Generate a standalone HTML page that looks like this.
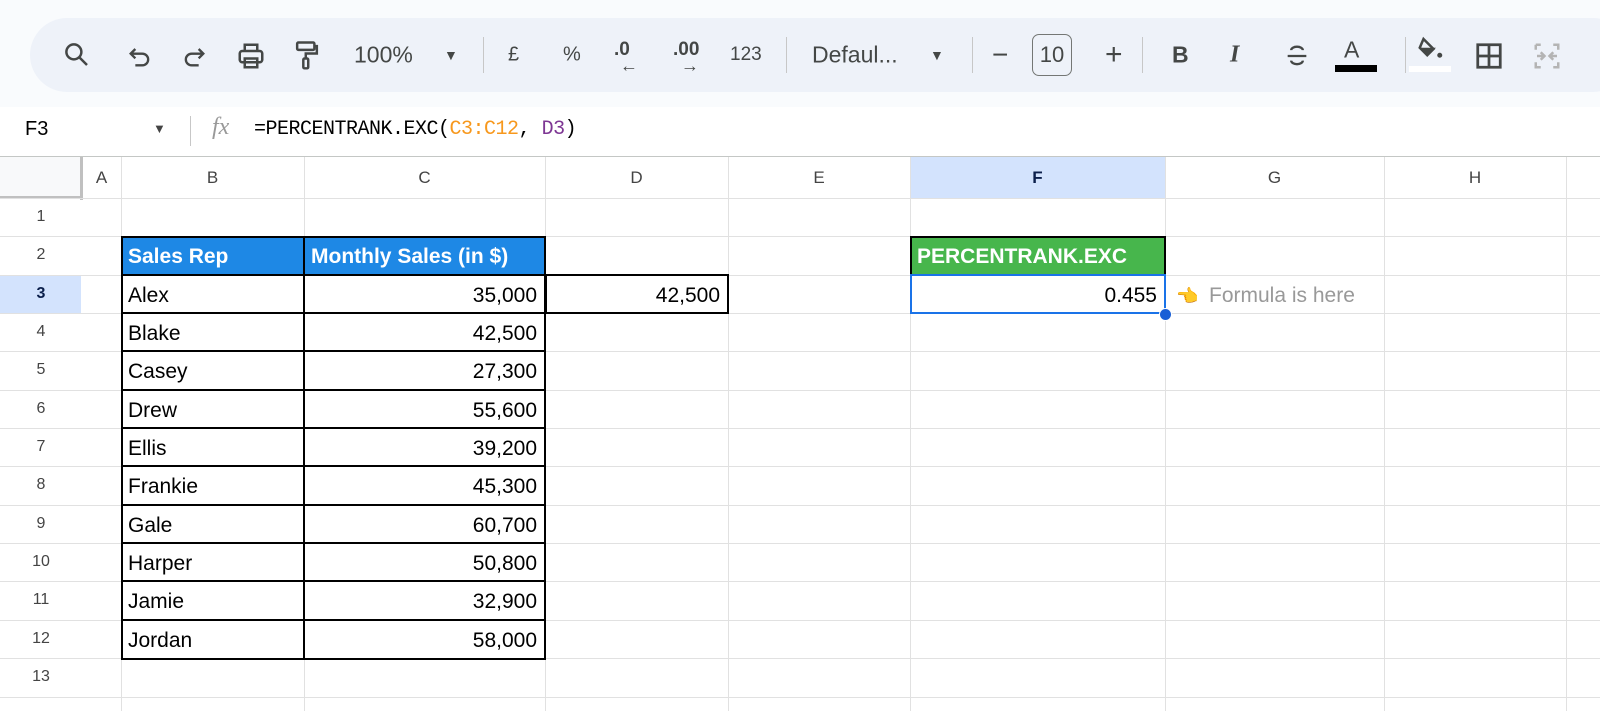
<!DOCTYPE html>
<html><head><meta charset="utf-8"><style>
*{margin:0;padding:0;box-sizing:border-box}
body{width:1600px;height:711px;overflow:hidden;background:#fff;font-family:"Liberation Sans",Arial,sans-serif;position:relative}
.a{position:absolute}
.top{left:0;top:0;width:1600px;height:107px;background:#f9fbfd}
.pill{left:30px;top:18px;width:1600px;height:74px;background:#eef2f9;border-radius:37px}
.tb{position:absolute;top:55px;transform:translateY(-50%);color:#444746;font-size:22px}
.sep{position:absolute;top:37px;width:1px;height:36px;background:#c7c7c7}
.vl{position:absolute;top:157px;width:1px;height:554px;background:#e1e1e1}
.hl{position:absolute;left:0;width:1600px;height:1px;background:#e1e1e1}
.ch{position:absolute;top:158px;height:40px;line-height:40px;text-align:center;font-size:17px;color:#444}
.rh{position:absolute;left:0;width:82px;text-align:center;font-size:16px;color:#444}
.c{position:absolute;font-size:21px;color:#000;line-height:38px;padding:0 6px;white-space:nowrap}
</style></head><body>
<div class="a top"></div>
<div class="a pill"></div>
<svg class="a" style="left:62px;top:40px" width="30" height="30" viewBox="0 0 24 24" fill="none" stroke="#444746" stroke-width="2"><circle cx="9.5" cy="9.5" r="6"/><path d="M14 14l6 6"/></svg>
<svg class="a" style="left:126px;top:42px" width="28" height="28" viewBox="0 0 24 24" fill="none" stroke="#444746" stroke-width="2"><path d="M8 6L4 10l4 4"/><path d="M4 10h10a5 5 0 010 10H8"/></svg>
<svg class="a" style="left:180px;top:42px" width="28" height="28" viewBox="0 0 24 24" fill="none" stroke="#444746" stroke-width="2"><path d="M16 6l4 4-4 4"/><path d="M20 10H10a5 5 0 000 10h6"/></svg>
<svg class="a" style="left:236px;top:41px" width="30" height="30" viewBox="0 0 24 24" fill="none" stroke="#444746" stroke-width="2"><rect x="3" y="8" width="18" height="9" rx="2"/><path d="M7 8V3h10v5M7 14h10v7H7z"/></svg>
<svg class="a" style="left:292px;top:40px" width="30" height="32" viewBox="0 0 24 26" fill="none" stroke="#444746" stroke-width="2"><rect x="4" y="2" width="14" height="6" rx="1"/><path d="M18 5h2v6h-9v4"/><rect x="9" y="15" width="4" height="8" rx="1"/></svg>
<div class="tb" style="left:354px;font-size:23px">100%</div>
<div class="tb" style="left:444px;font-size:14px">▼</div>
<div class="sep" style="left:483px"></div>
<div class="tb" style="left:508px;font-size:20px">£</div>
<div class="tb" style="left:563px;font-size:20px">%</div>
<div class="tb" style="left:614px;font-size:19px;top:50px;font-weight:bold">.0</div>
<div class="tb" style="left:620px;font-size:18px;top:66px;font-weight:bold">←</div>
<div class="tb" style="left:673px;font-size:19px;top:50px;font-weight:bold">.00</div>
<div class="tb" style="left:681px;font-size:18px;top:66px;font-weight:bold">→</div>
<div class="tb" style="left:730px;font-size:19px">123</div>
<div class="sep" style="left:786px"></div>
<div class="tb" style="left:812px;font-size:23px">Defaul...</div>
<div class="tb" style="left:930px;font-size:14px">▼</div>
<div class="sep" style="left:972px"></div>
<div class="tb" style="left:992px;font-size:28px">−</div>
<div class="a" style="left:1032px;top:34px;width:40px;height:42px;border:1.5px solid #747775;border-radius:7px;text-align:center;line-height:39px;font-size:22px;color:#444746">10</div>
<div class="tb" style="left:1105px;font-size:30px">+</div>
<div class="sep" style="left:1142px"></div>
<div class="tb" style="left:1172px;font-size:23px;font-weight:bold">B</div>
<div class="tb" style="left:1230px;font-size:24px;font-style:italic;font-family:'Liberation Serif',serif;font-weight:bold">I</div>
<svg class="a" style="left:1283px;top:42px" width="28" height="28" viewBox="0 0 24 24" fill="none" stroke="#444746" stroke-width="2"><path d="M7 7a5 3 0 0110 0M4 12h16M7 16a5 3 0 0010 0"/></svg>
<div class="tb" style="left:1344px;font-size:23px;top:50px">A</div>
<div class="a" style="left:1335px;top:65px;width:42px;height:7px;background:#000"></div>
<div class="sep" style="left:1405px"></div>
<svg class="a" style="left:1416px;top:35px" width="30" height="28" viewBox="0 0 24 22" fill="#444746"><path d="M6 3l8 8-5 5-6-6z" fill="none" stroke="#444746" stroke-width="2"/><path d="M4 10h12l-7 6z"/><circle cx="19" cy="16" r="2"/></svg>
<div class="a" style="left:1409px;top:66px;width:42px;height:6px;background:#fff"></div>
<svg class="a" style="left:1474px;top:41px" width="30" height="30" viewBox="0 0 24 24" fill="none" stroke="#444746" stroke-width="2.2"><rect x="3" y="3" width="18" height="18"/><path d="M12 3v18M3 12h18"/></svg>
<svg class="a" style="left:1532px;top:41px" width="30" height="30" viewBox="0 0 24 24" fill="none" stroke="#b4b4b4" stroke-width="2"><path d="M3 3h4M3 3v4M3 17v4h4M17 3h4v4M21 17v4h-4M4 12h5M7 9l3 3-3 3M20 12h-5M17 9l-3 3 3 3"/></svg>

<div class="a" style="left:25px;top:118px;font-size:20px;color:#000">F3</div>
<div class="a" style="left:153px;top:121px;font-size:13px;color:#444">▼</div>
<div class="a" style="left:190px;top:116px;width:1px;height:30px;background:#c7c7c7"></div>
<div class="a" style="left:212px;top:114px;font-size:24px;color:#999;font-style:italic;font-family:'Liberation Serif',serif">fx</div>
<div class="a" style="left:254px;top:118px;font-size:20px;font-family:'Liberation Mono',monospace;color:#000;letter-spacing:-0.5px">=PERCENTRANK.EXC(<span style="color:#f7981d">C3:C12</span>, <span style="color:#7e3794">D3</span>)</div>
<div class="hl" style="top:156px;background:#c4c7c5"></div>

<div class="a" style="left:0;top:157px;width:1600px;height:41px;background:#fff"></div>
<div class="a" style="left:0;top:157px;width:80px;height:39px;background:#f8f9fa"></div>
<div class="a" style="left:80px;top:157px;width:3px;height:43px;background:#c0c0c0"></div>
<div class="a" style="left:0;top:196px;width:83px;height:3px;background:#c0c0c0"></div>
<div class="a" style="left:910px;top:157px;width:255px;height:41px;background:#d3e3fd"></div>
<div class="a" style="left:0;top:275px;width:81px;height:38px;background:#d3e3fd"></div>
<div class="vl" style="left:121px"></div><div class="vl" style="left:304px"></div><div class="vl" style="left:545px"></div><div class="vl" style="left:728px"></div><div class="vl" style="left:910px"></div><div class="vl" style="left:1165px"></div><div class="vl" style="left:1384px"></div><div class="vl" style="left:1566px"></div>
<div class="hl" style="top:198px"></div><div class="hl" style="top:236px"></div><div class="hl" style="top:275px"></div><div class="hl" style="top:313px"></div><div class="hl" style="top:351px"></div><div class="hl" style="top:390px"></div><div class="hl" style="top:428px"></div><div class="hl" style="top:466px"></div><div class="hl" style="top:505px"></div><div class="hl" style="top:543px"></div><div class="hl" style="top:581px"></div><div class="hl" style="top:620px"></div><div class="hl" style="top:658px"></div><div class="hl" style="top:697px"></div>

<div class="ch" style="left:82px;width:39px">A</div><div class="ch" style="left:121px;width:183px">B</div><div class="ch" style="left:304px;width:241px">C</div><div class="ch" style="left:545px;width:183px">D</div><div class="ch" style="left:728px;width:182px">E</div><div class="ch" style="left:910px;width:255px;color:#0b1f4b;font-weight:bold">F</div><div class="ch" style="left:1165px;width:219px">G</div><div class="ch" style="left:1384px;width:182px">H</div>

<div class="rh" style="top:208px">1</div><div class="rh" style="top:246px">2</div><div class="rh" style="top:285px;font-weight:bold;color:#0b1f4b">3</div><div class="rh" style="top:323px">4</div><div class="rh" style="top:361px">5</div><div class="rh" style="top:400px">6</div><div class="rh" style="top:438px">7</div><div class="rh" style="top:476px">8</div><div class="rh" style="top:515px">9</div><div class="rh" style="top:553px">10</div><div class="rh" style="top:591px">11</div><div class="rh" style="top:630px">12</div><div class="rh" style="top:668px">13</div>

<div class="a" style="left:121px;top:236px;width:425px;height:39px;background:#1e88e5"></div>
<div class="a" style="left:121px;top:236px;width:425px;height:424px;border:2px solid #000"></div>
<div class="a" style="left:303px;top:236px;width:2px;height:424px;background:#000"></div>
<div class="a" style="left:121px;top:274px;width:425px;height:2px;background:#000"></div>
<div class="a" style="left:121px;top:312px;width:425px;height:2px;background:#000"></div>
<div class="a" style="left:121px;top:350px;width:425px;height:2px;background:#000"></div>
<div class="a" style="left:121px;top:389px;width:425px;height:2px;background:#000"></div>
<div class="a" style="left:121px;top:427px;width:425px;height:2px;background:#000"></div>
<div class="a" style="left:121px;top:465px;width:425px;height:2px;background:#000"></div>
<div class="a" style="left:121px;top:504px;width:425px;height:2px;background:#000"></div>
<div class="a" style="left:121px;top:542px;width:425px;height:2px;background:#000"></div>
<div class="a" style="left:121px;top:580px;width:425px;height:2px;background:#000"></div>
<div class="a" style="left:121px;top:619px;width:425px;height:2px;background:#000"></div>
<div class="c" style="left:122px;top:238px;color:#fff;font-weight:bold">Sales Rep</div>
<div class="c" style="left:305px;top:238px;color:#fff;font-weight:bold">Monthly Sales (in $)</div>
<div class="c" style="left:122px;top:277px">Alex</div><div class="c" style="left:122px;top:315px">Blake</div><div class="c" style="left:122px;top:353px">Casey</div><div class="c" style="left:122px;top:392px">Drew</div><div class="c" style="left:122px;top:430px">Ellis</div><div class="c" style="left:122px;top:468px">Frankie</div><div class="c" style="left:122px;top:507px">Gale</div><div class="c" style="left:122px;top:545px">Harper</div><div class="c" style="left:122px;top:583px">Jamie</div><div class="c" style="left:122px;top:622px">Jordan</div>
<div class="c" style="right:1057px;top:277px">35,000</div><div class="c" style="right:1057px;top:315px">42,500</div><div class="c" style="right:1057px;top:353px">27,300</div><div class="c" style="right:1057px;top:392px">55,600</div><div class="c" style="right:1057px;top:430px">39,200</div><div class="c" style="right:1057px;top:468px">45,300</div><div class="c" style="right:1057px;top:507px">60,700</div><div class="c" style="right:1057px;top:545px">50,800</div><div class="c" style="right:1057px;top:583px">32,900</div><div class="c" style="right:1057px;top:622px">58,000</div>
<div class="a" style="left:545px;top:274px;width:184px;height:40px;border:2px solid #000"></div>
<div class="c" style="right:874px;top:277px">42,500</div>

<div class="a" style="left:910px;top:236px;width:256px;height:39px;background:#47b64c;border:2px solid #000;border-bottom:none"></div>
<div class="c" style="left:912px;top:238px;color:#fff;font-weight:bold;padding:0 5px">PERCENTRANK.EXC</div>
<div class="a" style="left:910px;top:274px;width:256px;height:40px;border:2px solid #1a73e8"></div>
<div class="c" style="right:437px;top:277px">0.455</div>
<div class="a" style="left:1159px;top:308px;width:13px;height:13px;border-radius:50%;background:#1a5fd6;border:1px solid #fff"></div>
<div class="c" style="left:1170px;top:277px;font-size:18px">👈</div>
<div class="c" style="left:1203px;top:277px;color:#999;font-size:21px">Formula is here</div>
</body></html>
